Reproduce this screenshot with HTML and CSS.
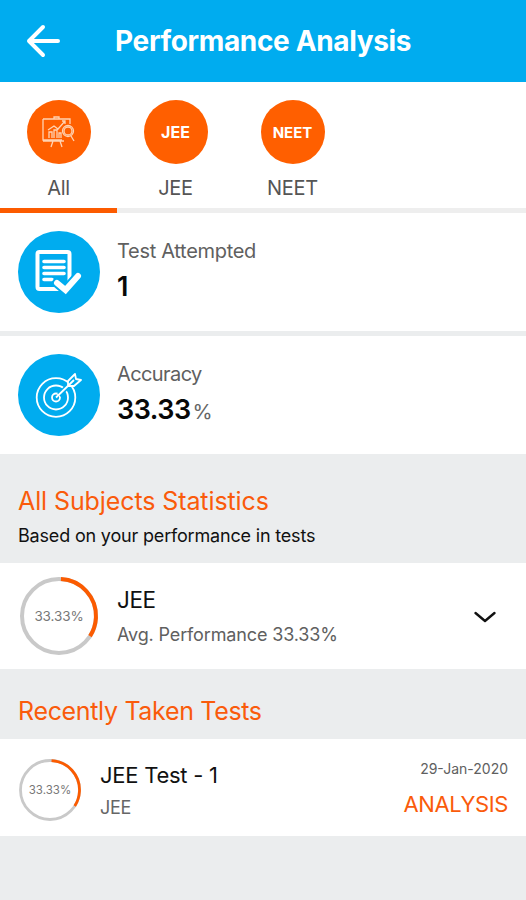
FILE: index.html
```html
<!DOCTYPE html>
<html lang="en">
<head>
<meta charset="utf-8">
<title>Performance Analysis</title>
<link rel="stylesheet" href="styles.css">
</head>
<body>
<header class="topbar">
  <svg class="back" width="36" height="36" viewBox="0 0 36 36"><path d="M18 4 4 18 18 32M4 18H33"/></svg>
  <h1><span>Performance Analysis</span></h1>
</header>
<nav class="tabs">
  <div class="tab active">
    <div class="badge">
      <svg class="board" width="34" height="32" viewBox="0 0 34 32">
        <path d="M1 3H28V8M1 3V24H20M12 3V1H17V3M1 25H22M11 25L9 31M18 25L20 31M7 22V16H10V22M12 22V14H15V22M17 22V17H19V22M6 14L12 10L16 13L23 5M20 5H23V8"/>
        <circle cx="26" cy="15" r="5.5"/><circle cx="26" cy="15" r="4"/><path d="M29 20L32 25"/>
      </svg>
    </div>
    <span class="tab-label">All</span>
  </div>
  <div class="tab"><div class="badge"><span class="bt-jee">JEE</span></div><span class="tab-label">JEE</span></div>
  <div class="tab"><div class="badge"><span class="bt-neet">NEET</span></div><span class="tab-label">NEET</span></div>
</nav>
<section class="metric">
  <div class="disc">
    <svg width="82" height="82" viewBox="0 0 82 82">
      <rect class="sheet" x="19.5" y="21" width="32" height="37" rx="2"/>
      <path class="lines" d="M26 30.500H46M26 36.500H46M26 42.500H46M26 48.500H34"/>
      <path class="tick-edge" d="M39 52L47.500 59L60 45"/>
      <path class="tick" d="M39 52L47.500 59L60 45"/>
    </svg>
  </div>
  <div class="metric-text"><p class="name attempted">Test Attempted</p><p class="value">1</p></div>
</section>
<section class="metric">
  <div class="disc">
    <svg class="target" width="82" height="82" viewBox="0 0 82 82">
      <circle cx="38" cy="43.500" r="19.300"/><circle cx="38" cy="43.500" r="12"/><circle cx="38" cy="43.500" r="4"/>
      <path class="gap" d="M41 41L53 29"/>
      <path d="M38 43.500L56 26M50 32V27L57 20L58 25L63 26L56 32H50"/>
    </svg>
  </div>
  <div class="metric-text"><p class="name accuracy">Accuracy</p><p class="value">33.33<span class="pct">%</span></p></div>
</section>
<section class="heading stats">
  <h2 class="h-stats">All Subjects Statistics</h2>
  <p class="sub">Based on your performance in tests</p>
</section>
<section class="subject">
  <div class="ring ring-lg">
    <svg width="80" height="80" viewBox="0 0 80 80"><circle class="track" cx="40" cy="40" r="37"/><circle class="arc" cx="40" cy="40" r="37" pathLength="100"/></svg>
    <span>33.33%</span>
  </div>
  <div class="subject-text"><p class="subject-name">JEE</p><p class="avg">Avg. Performance 33.33%</p></div>
  <svg class="chevron" width="24" height="14" viewBox="0 0 24 14"><path d="M2.500 3 12 11 21.500 3"/></svg>
</section>
<section class="heading recent"><h2 class="h-recent">Recently Taken Tests</h2></section>
<section class="test">
  <div class="ring ring-sm">
    <svg width="62" height="62" viewBox="0 0 62 62"><circle class="track" cx="31" cy="31" r="29.500"/><circle class="arc" cx="31" cy="31" r="29.500" pathLength="100"/></svg>
    <span>33.33%</span>
  </div>
  <div class="test-text"><p class="test-name">JEE Test - 1</p><p class="test-sub">JEE</p></div>
  <div class="test-side"><p class="date">29-Jan-2020</p><a class="analysis">ANALYSIS</a></div>
</section>
</body>
</html>
```
FILE: styles.css
```css
* { box-sizing: border-box; margin: 0; padding: 0; }
body { width: 526px; min-height: 900px; background: #ebedee; font-family: Inter, sans-serif; color: #111; overflow-x: hidden; }
svg { display: block; fill: none; }
p, h1, h2, span, a { white-space: nowrap; }
.topbar { height: 82px; background: #00acef; display: flex; align-items: center; padding-left: 25px; }
.back { stroke: #fff; stroke-width: 4; stroke-linecap: round; stroke-linejoin: round; }
.topbar h1 { margin-left: 54px; color: #fff; font-size: 28px; font-weight: 700; line-height: 34px; letter-spacing: -0.35px; }
.tabs { height: 131px; background: #fff; display: flex; border-bottom: 5px solid #eee; }
.tab { width: 117px; height: 131px; padding-top: 18px; display: flex; flex-direction: column; align-items: center; }
.tab.active { border-bottom: 5px solid #fc5b00; }
.badge { width: 64px; height: 64px; border-radius: 50%; background: #ff5f00; display: flex; align-items: center; justify-content: center; color: #fff; font-weight: 700; }
.board { stroke: #ffd3b3; stroke-width: 1.3; }
.bt-jee { font-size: 16px; }
.bt-neet { font-size: 15px; }
.tab-label { margin-top: 12px; font-size: 20px; line-height: 24px; color: #555; letter-spacing: -0.3px; }
.metric { height: 118px; background: #fff; padding-left: 18px; display: flex; align-items: center; }
.metric + .metric { margin-top: 5px; }
.disc { width: 82px; height: 82px; border-radius: 50%; background: #00acef; }
.sheet { stroke: #fff; stroke-width: 4; }
.lines { stroke: #fff; stroke-width: 3.6; stroke-linecap: round; }
.tick-edge { stroke: #00acef; stroke-width: 10; stroke-linecap: round; }
.tick { stroke: #fff; stroke-width: 6; stroke-linecap: round; }
.target { stroke: #fff; stroke-width: 1.8; stroke-linejoin: round; }
.target .gap { stroke: #00acef; stroke-width: 5; }
.metric-text { margin-left: 17px; }
.name { font-size: 20px; line-height: 24px; color: #606060; }
.attempted { margin-top: -1px; letter-spacing: -0.3px; }
.accuracy { letter-spacing: -0.6px; }
.value { margin-top: 7px; font-size: 27px; line-height: 34px; font-weight: 600; color: #080808; letter-spacing: -0.5px; }
.pct { font-size: 20.5px; font-weight: 400; color: #666; margin-left: 2px; letter-spacing: 0; }
.heading { padding-left: 18px; }
.heading h2 { font-size: 25px; line-height: 30px; font-weight: 400; color: #fa5b0b; }
.heading .h-stats { letter-spacing: -0.1px; }
.heading .h-recent { letter-spacing: -0.33px; }
.stats { height: 109px; padding-top: 32px; }
.sub { margin-top: 9px; font-size: 18px; line-height: 22px; letter-spacing: -0.18px; }
.subject { height: 106px; background: #fff; display: flex; align-items: center; padding: 0 29px 0 19px; }
.ring { display: grid; place-items: center; }
.ring > * { grid-area: 1 / 1; }
.ring svg { stroke-width: 4; }
.ring-sm svg { stroke-width: 2.8; }
.ring span { color: #777; }
.ring-lg span { font-size: 13.5px; letter-spacing: -0.1px; }
.ring-sm span { font-size: 11.5px; }
.track { stroke: #c9c9c9; }
.arc { stroke: #fb5b00; stroke-dasharray: 33.33 66.67; transform: rotate(-87deg); transform-origin: center; }
.subject-text { margin-left: 18px; }
.subject-name { font-size: 22.5px; line-height: 28px; letter-spacing: -0.4px; }
.avg { margin-top: 10px; font-size: 18px; line-height: 22px; color: #606060; letter-spacing: -0.14px; }
.chevron { margin: 2px 0 0 auto; stroke: #111; stroke-width: 2.4; stroke-linecap: round; stroke-linejoin: round; }
.recent { height: 70px; padding-top: 27px; }
.test { height: 97px; background: #fff; display: flex; align-items: flex-start; padding: 20px 18px 0 19px; }
.test-text { margin-left: 19px; padding-top: 2px; }
.test-name { font-size: 22px; line-height: 28px; letter-spacing: -0.25px; }
.test-sub { margin-top: 8px; font-size: 18px; line-height: 22px; color: #666; letter-spacing: -0.3px; }
.test-side { margin-left: auto; text-align: right; }
.date { margin-top: 1px; font-size: 14px; line-height: 18px; color: #606060; }
.analysis { display: block; margin-top: 12px; font-size: 22px; line-height: 28px; color: #fa5b0b; letter-spacing: -0.4px; }
```
